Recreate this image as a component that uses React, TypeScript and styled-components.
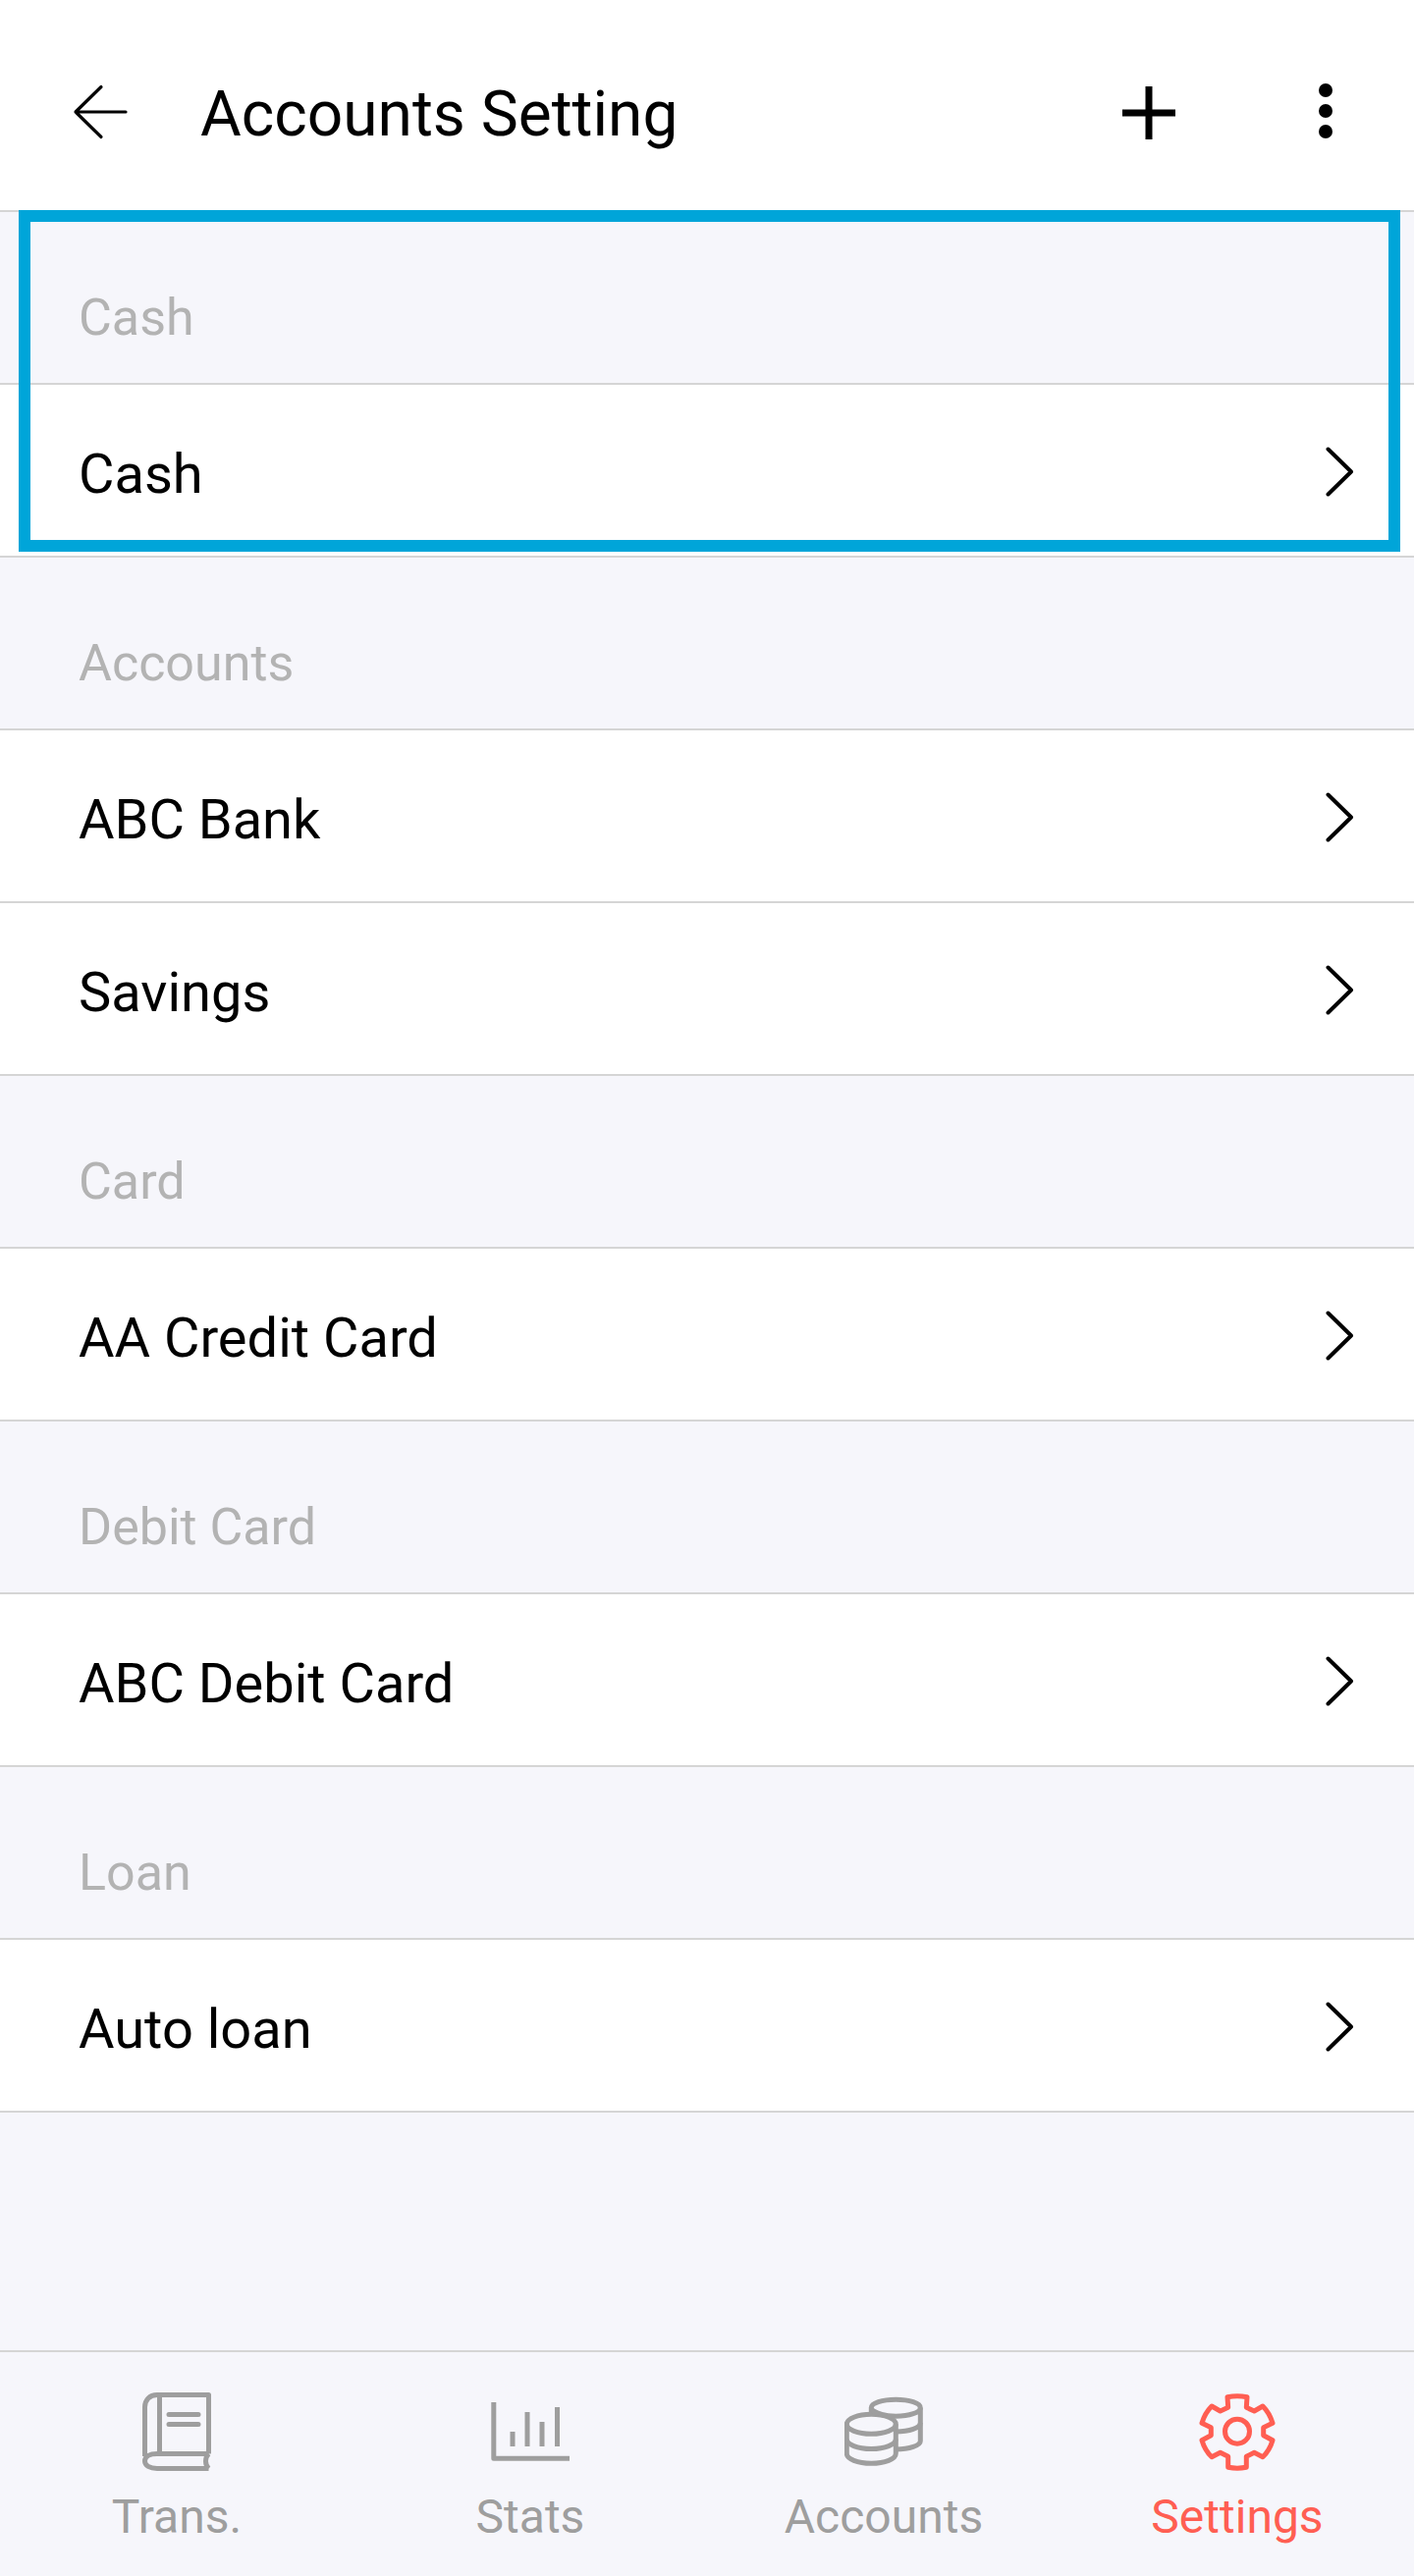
import * as React from 'react'
import styled, {createGlobalStyle} from 'styled-components'

const GlobalStyle = createGlobalStyle`
  html, body {
    margin: 0;
    padding: 0;
    background: #f6f6fb;
    font-family: Roboto, "Liberation Sans", sans-serif;
  }
  * {
    box-sizing: border-box;
  }
`

const Screen = styled.div`
  width: 1440px;
  height: 2624px;
  display: flex;
  flex-direction: column;
  background: #f6f6fb;
`

const Header = styled.header`
  height: 216px;
  flex: none;
  display: flex;
  align-items: center;
  padding: 16px 60px 0 72px;
  background: #fff;
  border-bottom: 2px solid #d5d5d5;
`

const Title = styled.h1`
  margin: 3px auto 0 72px;
  font-size: 64px;
  font-weight: 400;
  color: #000;
`

const PlusButton = styled.svg`
  width: 60px;
  height: 60px;
  margin-right: 120px;
`

const HeaderIcon = styled.svg`
  width: 60px;
  height: 60px;
  flex: none;
`

const List = styled.main`
  flex: 1;
`

const Section = styled.section`
  position: relative;
`

const Highlight = styled.div`
  position: absolute;
  top: -2px;
  left: 19px;
  right: 14px;
  bottom: 6px;
  border: 12px solid #00a5d9;
`

const SectionTitle = styled.div`
  height: 176px;
  display: flex;
  align-items: flex-end;
  padding: 0 80px 36px;
  border-bottom: 2px solid #d5d5d5;
  font-size: 52px;
  line-height: 60px;
  color: #b3b3b3;
`

const Row = styled.div`
  height: 176px;
  display: flex;
  align-items: center;
  justify-content: space-between;
  padding: 0 60px 0 80px;
  background: #fff;
  border-bottom: 2px solid #d5d5d5;
  font-size: 56px;
  color: #000;
`

const RowLabel = styled.span`
  margin-top: 7px;
`

const Chevron = styled.svg`
  width: 30px;
  height: 60px;
  flex: none;
`

const TabBar = styled.nav`
  height: 230px;
  flex: none;
  display: grid;
  grid-template-columns: repeat(4, 1fr);
  padding-top: 41px;
  border-top: 2px solid #d5d5d5;
`

const Tab = styled.div<{$active?: boolean}>`
  display: flex;
  flex-direction: column;
  align-items: center;
  color: ${props => (props.$active ? '#ff5e52' : '#9e9e9e')};
`

const TabIcon = styled.svg`
  width: 80px;
  height: 80px;
  fill: none;
  stroke: currentColor;
  stroke-width: 5;
  stroke-linejoin: round;
`

const TabLabel = styled.span`
  margin-top: 19px;
  font-size: 48px;
  line-height: 56px;
`

const groups = [
  {title: 'Cash', rows: ['Cash']},
  {title: 'Accounts', rows: ['ABC Bank', 'Savings']},
  {title: 'Card', rows: ['AA Credit Card']},
  {title: 'Debit Card', rows: ['ABC Debit Card']},
  {title: 'Loan', rows: ['Auto loan']},
]

const BookIcon = () => (
  <TabIcon viewBox='0 0 80 80'>
    <path d='M72.5 62.5V2.5H20C12.5 2.5 7.5 7.5 7.5 15V65' />
    <path d='M22.5 2.5V62.5' />
    <path d='M72.5 62.5H20C12.5 62.5 7.5 65 7.5 70C7.5 74.500 12.500 77.500 20 77.500H72.500' />
    <path d='M72.500 62.500C68.500 66.500 68.500 73.500 72.500 77.500' />
    <path d='M32 22.500H62M32 32.500H62' strokeLinecap='round' />
  </TabIcon>
)

const StatsIcon = () => (
  <TabIcon viewBox='0 0 80 80'>
    <path d='M2.800 10V67.300H80' />
    <path d='M22 40V55M37 20V55M52 30V55M67.500 15V55' />
  </TabIcon>
)

const CoinsIcon = () => (
  <TabIcon viewBox='0 0 80 80'>
    <ellipse cx='27.300' cy='32.300' rx='25' ry='10' />
    <path d='M2.300 32.300V62.300C2.300 67.800 13.300 72.300 27.300 72.300S52.300 67.800 52.300 62.300V32.300' />
    <path d='M2.300 47.500C2.300 53 13.300 57.500 27.300 57.500S52.300 53 52.300 47.500' />
    <path d='M27.300 22.500V15.700C27.300 11 38.300 7.200 52.300 7.200S77.300 11 77.300 15.700V49.500C77.300 54 66.300 58 52.300 58' />
    <path d='M27.300 15.700C27.300 18 31 20.500 38 22.500C42 23.700 47 24.200 52.300 24.200C66.300 24.200 77.300 20.400 77.300 15.700' />
    <path d='M52.300 40C66.300 40 77.300 36 77.300 31' />
  </TabIcon>
)

const GearIcon = () => (
  <TabIcon viewBox='0 0 80 80'>
    <path d='M30 4.700Q40 2.700 50 4.700L49.300 15.300L57.300 19L66 14Q73 21 76 31.300L66.700 35.700V43.700L76 48.700Q73 59 66 65.700L57.300 61.300L49.300 65.300V76.300Q40 78 30.700 76.300V65.300L22.700 61.300L14 65.700Q7 59 4 48.700L13.300 43.700V35.700L4 31.300Q7 21 14 14L22.700 19L30.700 15.300Z' />
    <circle cx='40' cy='39.700' r='12.500' />
  </TabIcon>
)

const tabs = [
  {label: 'Trans.', icon: <BookIcon />},
  {label: 'Stats', icon: <StatsIcon />},
  {label: 'Accounts', icon: <CoinsIcon />},
  {label: 'Settings', icon: <GearIcon />, active: true},
]

export default function App() {
  return (
    <Screen>
      <GlobalStyle />
      <Header>
        <HeaderIcon viewBox='0 0 60 60' fill='none' stroke='#000' strokeWidth={3.200} strokeLinecap='round' strokeLinejoin='round'>
          <path d='M31 4.500L5 30L31 55.500M5 30H56' transform='translate(0 -1)' />
        </HeaderIcon>
        <Title>Accounts Setting</Title>
        <PlusButton viewBox='0 0 60 60' fill='none' stroke='#000' strokeWidth={7}>
          <path d='M30 3V57M3 30H57' />
        </PlusButton>
        <HeaderIcon viewBox='0 0 60 60' fill='#000'>
          <circle cx='30' cy='7' r='7' />
          <circle cx='30' cy='28' r='7' />
          <circle cx='30' cy='49' r='7' />
        </HeaderIcon>
      </Header>
      <List>
        {groups.map((group, index) => (
          <Section key={group.title}>
            <SectionTitle>{group.title}</SectionTitle>
            {group.rows.map(row => (
              <Row key={row}>
                <RowLabel>{row}</RowLabel>
                <Chevron viewBox='0 0 30 60' fill='none' stroke='#000' strokeWidth={4} strokeLinecap='round' strokeLinejoin='round'>
                  <path d='M2.500 8.500L26 31.500L2.500 54.500' />
                </Chevron>
              </Row>
            ))}
            {index === 0 && <Highlight />}
          </Section>
        ))}
      </List>
      <TabBar>
        {tabs.map(tab => (
          <Tab key={tab.label} $active={tab.active}>
            {tab.icon}
            <TabLabel>{tab.label}</TabLabel>
          </Tab>
        ))}
      </TabBar>
    </Screen>
  )
}
